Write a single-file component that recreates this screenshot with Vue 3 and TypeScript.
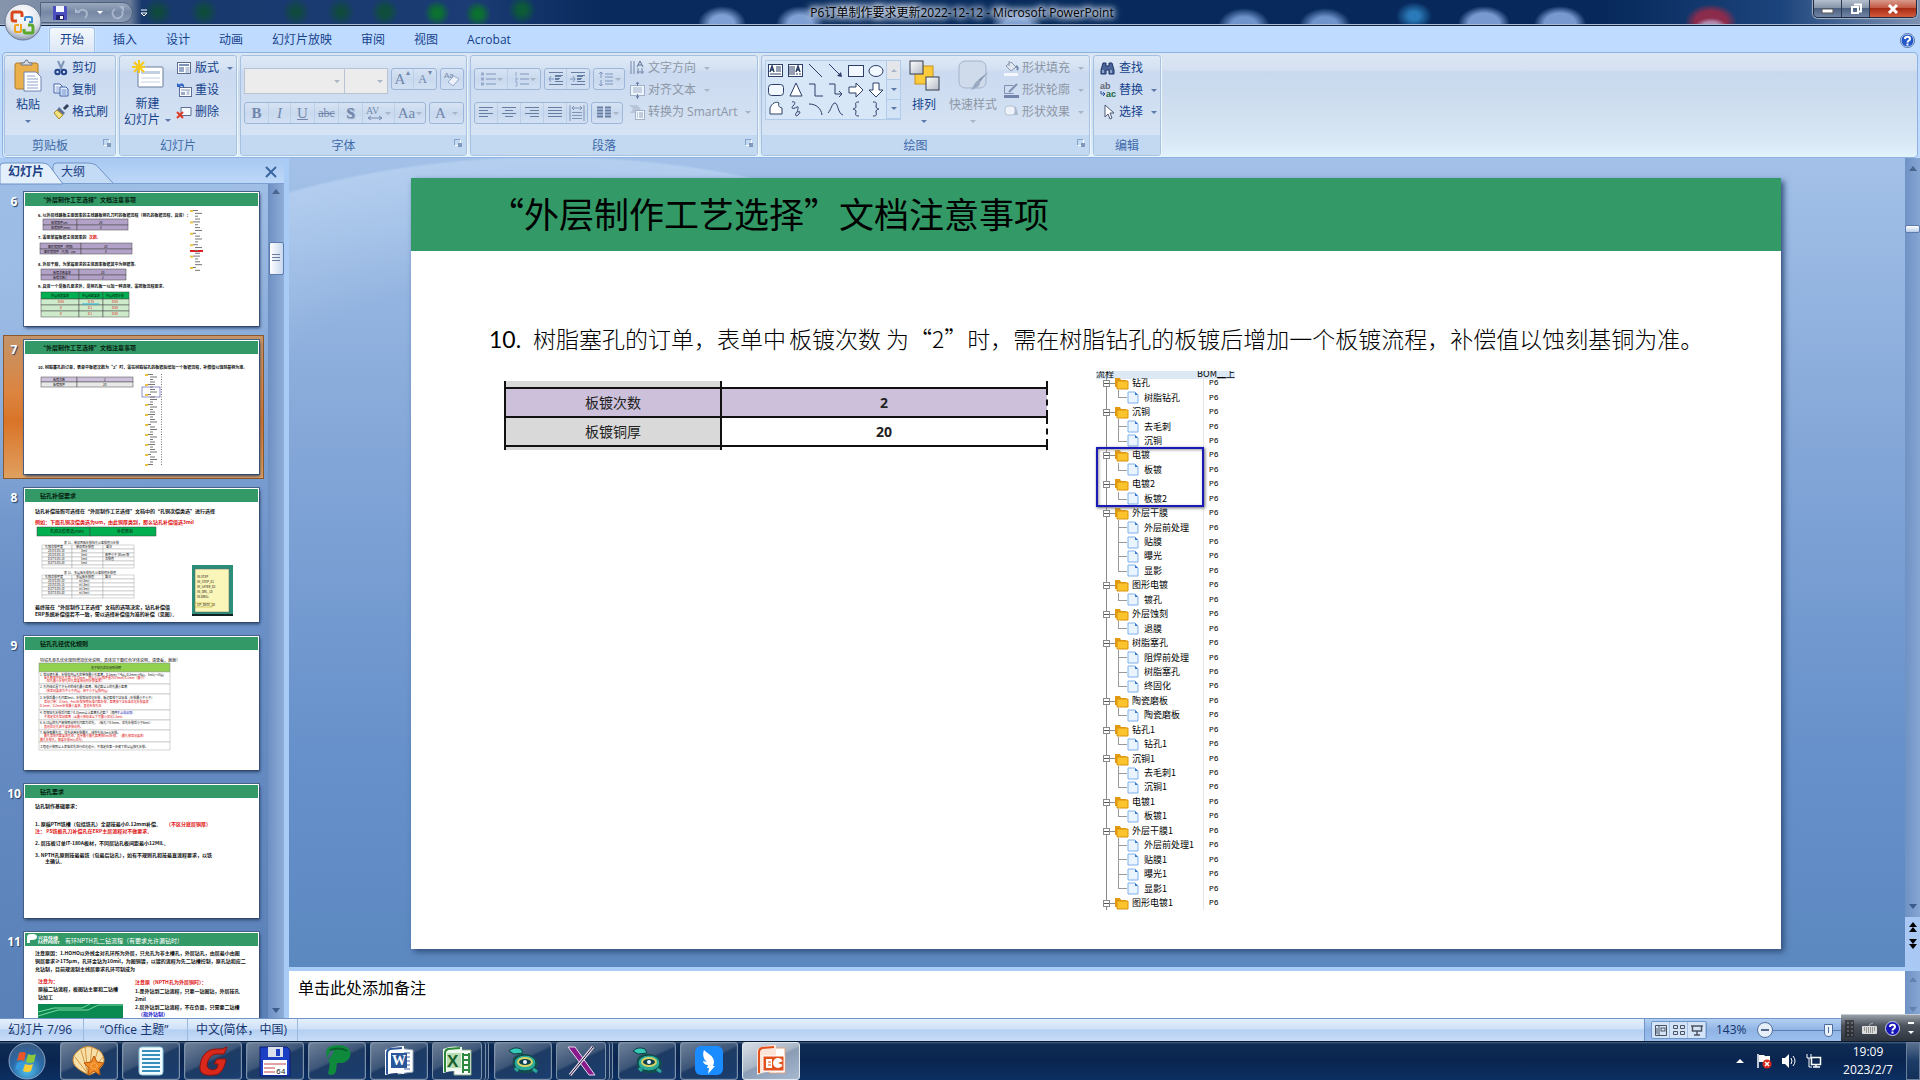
<script setup lang="ts">
import { ref } from 'vue'

interface TreeRow { name: string; folder?: boolean; last?: boolean }
interface Line { x: number; y: number; t: string; c?: string; s?: number; b?: boolean }
interface Box { x: number; y: number; w: number; h: number; f?: string; k?: string }
interface Thumb { no: number; title: string; lines: Line[]; boxes: Box[]; tree?: { x: number; y: number; n: number; step: number } }

const zoom = ref(50)
const notes = ref('单击此处添加备注')

const tabs = ['开始', '插入', '设计', '动画', '幻灯片放映', '审阅', '视图', 'Acrobat']

const P = 'fill="none" stroke="#6d87b0"'
const D = 'fill="none" stroke="#2c3e66"'
const icon: Record<string, string> = {
  cut: '<path d="M5 1l4 9M11 1L7 10" stroke="#7e96b8" stroke-width="2" fill="none"/><circle cx="4.500" cy="12" r="2.200" fill="none" stroke="#24448c" stroke-width="2"/><circle cx="11" cy="12" r="2.200" fill="none" stroke="#24448c" stroke-width="2"/>',
  copy: '<path d="M1 2h6l2 2v7H1z" fill="#fff" stroke="#3f62a8"/><path d="M2.500 5h4M2.500 7h4M2.500 9h4" stroke="#7f9fd8"/><path d="M7 5h6l2 2v7H7z" fill="#eaf2ff" stroke="#3f62a8"/><path d="M8.500 8h5M8.500 10h5M8.500 12h5" stroke="#5f84c8"/>',
  brush: '<path d="M15 1l-4 4" stroke="#35405a" stroke-width="3"/><path d="M6 3l6 6-2 2-6-5z" fill="#5e6f96"/><path d="M4 6l6 5-4 4-5-6z" fill="#f3e27c" stroke="#a08a2c"/>',
  layout: '<rect x="1.500" y="2.500" width="13" height="11" fill="#fff" stroke="#5c6f92"/><path d="M3 5h10" stroke="#7f93b8" stroke-width="2"/><rect x="3" y="7" width="5" height="5" fill="#98a9c8"/><path d="M9.500 8h4M9.500 10h4M9.500 12h4" stroke="#7f93b8"/>',
  reset: '<rect x="3.500" y="5.500" width="12" height="9" fill="#fff" stroke="#5c6f92"/><path d="M5 8h9" stroke="#7f93b8"/><rect x="5" y="10" width="4" height="3" fill="#98a9c8"/><path d="M10.500 10h3M10.500 12h3" stroke="#7f93b8"/><path d="M1 5V1l2 1.500C6 0 9 2 8 6 7 4 5 3.500 4 4l1 1z" fill="#2f63c4"/>',
  del: '<path d="M5 3.500h10v8H5z" fill="#f4f8ff" stroke="#5c6f92"/><path d="M1 8l6 6M7 8l-6 6" stroke="#e03a24" stroke-width="2"/>',
  find: '<path d="M3 3h3v3h3V3h3l2 7v4H9v-4H6v4H1v-4z" fill="#4a6398" stroke="#1f3564"/><path d="M3 10v3M11 10v3" stroke="#dbe6fa"/>',
  select: '<path d="M5 1v12l3-3 2 5 2-1-2-5h4z" fill="#fff" stroke="#4a5878"/>',
  fill: '<path d="M3 6l5-4 5 5-5 4z" fill="#dfe6f0" stroke="#8795b0"/><path d="M13 6c2 1 2 3 1 4" stroke="#7186ac" stroke-width="2" fill="none"/><path d="M6 1v5" stroke="#8795b0"/><rect x="1" y="13" width="14" height="3" fill="#f4f8fc"/>',
  outline: '<path d="M1.500 3.500h9M1.500 3.500v8h9" fill="none" stroke="#8090b0"/><path d="M14 2L6 10" stroke="#8090b0" stroke-width="2"/><rect x="1" y="13" width="15" height="3" fill="#7384aa"/>',
  effect: '<path d="M4 3h9l2 8H4z" fill="#a9b7cc"/><rect x="2" y="2" width="10" height="9" rx="3" fill="#eef3fa" stroke="#b4c0d2"/>',
  tdir: '<path d="M2 1v13M5 1v13M9 8v6M13 8v6M8 12h7" stroke="#7487a8" fill="none"/><path d="M8 7l3-6 3 6M9 5h4" stroke="#5d7196" fill="none"/>',
  talign: '<rect x="1.500" y="3.500" width="14" height="10" fill="#eef4fc" stroke="#9fb0c8"/><path d="M4 6h9M4 8h9M4 10h9" stroke="#9fb0c8"/><path d="M8.500 0v4M8.500 12v5M7 2l1.500-2L10 2M7 14l1.500 2L10 14" stroke="#6b80a4" fill="none"/>',
  smart: '<path d="M0 1h8l4 4-4 4H1l3-4z" fill="#b9c5d8"/><rect x="6.500" y="6.500" width="9" height="9" fill="#f4f7fb" stroke="#9fb0c8"/><path d="M8 9h1M8 11h1M8 13h1M10 9h4M10 11h4M10 13h4" stroke="#8fa0bc"/>',
  bullets: `<path d="M6 3h10M6 8h10M6 13h10" ${P}/><path d="M1 3h3M1 8h3M1 13h3" stroke="#8aa0c4" stroke-width="3"/>`,
  numbers: `<path d="M7 3h9M7 8h9M7 13h9" ${P}/><path d="M3 1v4M2 7h2v2H2M2 11h2v4H2" stroke="#8aa0c4" fill="none"/>`,
  outdent: `<path d="M1 1.500h14M7 4.500h8M7 7.500h5M7 10.500h8M1 13.500h14" stroke="#4d678f"/><path d="M7 5.500h6M7 8.500h4" stroke="#4d678f"/><path d="M6 8H1M3 5L1 8l2 3" ${P}/>`,
  indent: `<path d="M1 1.500h14M7 4.500h8M7 7.500h5M7 10.500h8M1 13.500h14" stroke="#4d678f"/><path d="M7 5.500h6M7 8.500h4" stroke="#4d678f"/><path d="M0 8h5M3 5l2 3-2 3" ${P}/>`,
  spacing: `<path d="M7 3h8M7 6h8M7 10h8M7 13h8" ${P}/><path d="M3 1v6M1 3l2-2 2 2M3 9v6M1 13l2 2 2-2" ${P}/>`,
  left: '<path d="M1 2.500h14M1 5.500h9M1 8.500h14M1 11.500h9" stroke="#4d678f"/>',
  center: '<path d="M1 2.500h14M4 5.500h8M1 8.500h14M4 11.500h8" stroke="#4d678f"/>',
  right: '<path d="M1 2.500h14M6 5.500h9M1 8.500h14M6 11.500h9" stroke="#4d678f"/>',
  justify: '<path d="M1 2.500h14M1 5.500h14M1 8.500h14M1 11.500h14" stroke="#4d678f"/>',
  spread: '<path d="M1 0v16M15 0v16M3 3h10M5 1L3 3l2 2M11 1l2 2-2 2M3 7.500h10M3 10.500h10M3 13.500h10" stroke="#6d82a6" fill="none"/>',
  columns: '<path d="M1 2.500h6M1 5.500h6M1 8.500h6M1 11.500h6M9 2.500h6M9 5.500h6M9 8.500h6M9 11.500h6" stroke="#4d678f" stroke-width="2"/>',
}

const shapes: string[] = [
  `<rect x="1.500" y="2.500" width="14" height="12" fill="#fff" stroke="#2c3e66"/><path d="M3 10l2-6 2 6M4 8h2" ${D} stroke-width="1.500"/><path d="M9 5h5M9 7h5M9 9h5M3 12h11" ${D}/>`,
  `<rect x="1.500" y="2.500" width="14" height="12" fill="#fff" stroke="#2c3e66"/><path d="M9 10l2-6 2 6M10 8h2" ${D} stroke-width="1.500"/><path d="M3 4v9M5 4v9M7 4v9M10 11v2M13 11v2" ${D}/>`,
  `<path d="M2 2l13 13" ${D}/>`,
  `<path d="M2 2l12 12" ${D}/><path d="M15 15l-5-1 4-4z" fill="#2c3e66"/>`,
  `<rect x="1.500" y="3.500" width="15" height="11" fill="#f2f8ff" stroke="#2c3e66"/>`,
  `<ellipse cx="9" cy="9" rx="7" ry="5.500" fill="#f2f8ff" stroke="#2c3e66"/>`,
  `<rect x="1.500" y="3.500" width="15" height="11" rx="3" fill="#f2f8ff" stroke="#2c3e66"/>`,
  `<path d="M9 2l6 13H3z" fill="#fff" stroke="#2c3e66"/>`,
  `<path d="M2 3h6v12h8" ${D}/>`,
  `<path d="M2 3h6v10h7M12 10l3 3-3 3" ${D}/>`,
  `<path d="M2 6h7V2l7 7-7 7v-4H2z" fill="#fff" stroke="#2c3e66"/>`,
  `<path d="M6 2h6v7h4l-7 7-7-7h4z" fill="#fff" stroke="#2c3e66"/>`,
  `<path d="M3 8c2-5 6-7 9-5-1 3 0 4 3 5v6H3z" fill="#fff" stroke="#2c3e66"/>`,
  `<path d="M5 2c3-1 4 1 1 4s1 3 4 1-1 6 1 5 3 0 0 3-3-2-1-3" ${D}/>`,
  `<path d="M2 4c7 0 12 4 13 11" ${D}/>`,
  `<path d="M1 13C4 10 5 3 8 3s3 11 8 12" ${D}/>`,
  `<path d="M12 2c-5 0-3 2-3 5-1 2-2 2-3 2 1 0 2 0 3 2 0 3-2 5 3 5" ${D}/>`,
  `<path d="M6 2c5 0 3 2 3 5 1 2 2 2 3 2-1 0-2 0-3 2 0 3 2 5-3 5" ${D}/>`,
]

const f = (name: string): TreeRow => ({ name, folder: true })
const n = (name: string): TreeRow => ({ name })
const z = (name: string): TreeRow => ({ name, last: true })
const tree: TreeRow[] = [
  f('钻孔'), z('树脂钻孔'), f('沉铜'), n('去毛刺'), z('沉铜'), f('电镀'), z('板镀'), f('电镀2'), z('板镀2'),
  f('外层干膜'), n('外层前处理'), n('贴膜'), n('曝光'), z('显影'), f('图形电镀'), z('镀孔'), f('外层蚀刻'), z('退膜'),
  f('树脂塞孔'), n('阻焊前处理'), n('树脂塞孔'), z('终固化'), f('陶瓷磨板'), z('陶瓷磨板'), f('钻孔1'), z('钻孔1'),
  f('沉铜1'), n('去毛刺1'), z('沉铜1'), f('电镀1'), z('板镀1'), f('外层干膜1'), n('外层前处理1'), n('贴膜1'),
  n('曝光1'), z('显影1'), f('图形电镀1'),
]

const red = '#e01010'
const lilac = '#b3a2c7'
const grid = (x: number, y: number, cols: number[], rows: number[], fill: string, k = '#444'): Box[] => {
  const out: Box[] = []
  let yy = y
  for (const h of rows) {
    let xx = x
    for (const w of cols) {
      out.push({ x: xx, y: yy, w, h, f: fill, k })
      xx += w
    }
    yy += h
  }
  return out
}

const thumbs: Thumb[] = [
  {
    no: 6, title: '“外层制作工艺选择”文档注意事项',
    tree: { x: 163, y: 18, n: 22, step: 3 },
    boxes: [
      ...grid(19, 27, [34, 51], [6, 5], lilac), ...grid(16, 51, [41, 51], [6, 5], lilac),
      ...grid(17, 77, [38, 47], [6, 5], lilac), ...grid(17, 100, [38, 24, 26], [7], '#00b050'),
      ...grid(17, 107, [38, 24, 26], [6, 6, 6], '#cdeaca'),
    ],
    lines: [
      { x: 14, y: 25, s: 4, b: true, t: '6. 以外层线路板主要因素的主线路板铜孔刀时的板镀流程（铜孔的板镀流程，具体）：' },
      { x: 14, y: 47, s: 4, b: true, t: '7. 需要掌握板镀主体因素的' }, { x: 65, y: 47, s: 4, b: true, c: red, t: '次数。' },
      { x: 14, y: 74, s: 4, b: true, t: '8.  外层干膜，为掌握要求的主体因素板镀其中为铜镀等。' },
      { x: 14, y: 96, s: 4, b: true, t: '9.  具体一个是板孔要求外，是铜孔板一以加一种选项，需按板流程要求。' },
      { x: 27, y: 32, s: 3, t: '板镀铜厚um' }, { x: 75, y: 32, s: 3, t: '20' }, { x: 27, y: 37, s: 3, t: '板镀铜厚(mm)' }, { x: 76, y: 37, s: 3, t: '8' },
      { x: 24, y: 56, s: 3, t: '图形镀铜厚（面铜）' }, { x: 80, y: 56, s: 3, t: '20' }, { x: 20, y: 61, s: 3, t: '图形镀铜厚（孔铜）um' }, { x: 81, y: 61, s: 3, t: '8' },
      { x: 29, y: 82, s: 3, t: '板镀次数要求' }, { x: 77, y: 82, s: 3, t: '20' }, { x: 29, y: 87, s: 3, t: '板镀次数1' }, { x: 78, y: 87, s: 3, t: '2' },
      { x: 27, y: 105, s: 3, t: '外层线宽要求' }, { x: 58, y: 105, s: 3, t: '外层线距要求' }, { x: 82, y: 105, s: 3, t: '外层线宽补偿' },
      { x: 34, y: 111, s: 3, c: red, t: '0.05' }, { x: 64, y: 111, s: 3, c: red, t: '0.75' }, { x: 88, y: 111, s: 3, c: red, t: '0.05' },
      { x: 36, y: 117, s: 3, c: red, t: '0' }, { x: 64, y: 117, s: 3, c: red, t: '0.1' }, { x: 88, y: 117, s: 3, c: red, t: '0.05' },
      { x: 36, y: 123, s: 3, c: red, t: '0' }, { x: 64, y: 123, s: 3, c: red, t: '0.1' }, { x: 88, y: 123, s: 3, c: red, t: '0.05' },
    ],
  },
  {
    no: 7, title: '“外层制作工艺选择”文档注意事项',
    tree: { x: 118, y: 34, n: 37, step: 2 },
    boxes: [...grid(17, 37, [36, 56], [5], '#ccc0da'), ...grid(17, 42, [36, 56], [5], '#e8e8e8'), { x: 118, y: 47, w: 18, h: 10, f: 'none', k: '#2222a0' }],
    lines: [
      { x: 14, y: 29, s: 4, b: true, t: '10.  树脂塞孔的订单，表单中板镀次数为“2”时，需在树脂钻孔的板镀后增加一个板镀流程，补偿值以蚀刻基铜为准。' },
      { x: 29, y: 41, s: 3, t: '板镀次数' }, { x: 80, y: 41, s: 3, t: '2' }, { x: 29, y: 46, s: 3, t: '板镀铜厚' }, { x: 79, y: 46, s: 3, t: '20' },
    ],
  },
  {
    no: 8, title: '钻孔补偿要求',
    boxes: [
      ...grid(13, 39, [53, 66], [9], '#00b050'), ...grid(18, 57, [30, 31, 31], [4, 4, 4, 4, 4, 3], '#fff', '#aaa'),
      ...grid(18, 87, [30, 31, 31], [4, 4, 4, 4, 4, 3], '#fff', '#aaa'),
      { x: 168, y: 77, w: 41, h: 51, f: '#2a8e78' }, { x: 171, y: 81, w: 34, h: 43, f: '#faf5b8', k: '#666' }, { x: 168, y: 126, w: 41, h: 2, f: '#122' },
      { x: 171, y: 115, w: 17, h: 4, f: 'none', k: '#b3a520' },
    ],
    lines: [
      { x: 11, y: 25, s: 5, b: true, t: '钻孔补偿按照可选择在“外层制作工艺选择”文档中的“孔铜次偿类选”进行选择' },
      { x: 11, y: 36, s: 5, b: true, c: red, t: '例如：下面孔铜次偿类选为um，由此铜厚类别，那么钻孔补偿值选3mil' },
      { x: 26, y: 45, s: 4, t: '孔铜次偿类选(mm)' }, { x: 93, y: 45, s: 4, t: '补偿类别' },
      { x: 40, y: 56, s: 3, t: '表 11、单双面板补偿钻孔公差偿值与补偿' }, { x: 40, y: 86, s: 3, t: '表 11、多层板补偿钻孔公差偿值补偿值' },
      { x: 21, y: 60, s: 3, t: '孔铜次偿厚度' }, { x: 52, y: 60, s: 3, t: '单双面补偿值' }, { x: 82, y: 60, s: 3, t: '备注' },
      { x: 24, y: 64, s: 3, t: '20.0 0.05.10' }, { x: 57, y: 64, s: 3, t: '3mil' }, { x: 24, y: 68, s: 3, t: '20.0 0.05.15' }, { x: 57, y: 68, s: 3, t: '3mil' },
      { x: 24, y: 72, s: 3, t: '0.07 0.05.10' }, { x: 57, y: 72, s: 3, t: '5mil' }, { x: 24, y: 76, s: 3, t: '0.07 0.05.20' }, { x: 57, y: 76, s: 3, t: '5mil' },
      { x: 81, y: 68, s: 3, t: '若厚小于 30um 取' }, { x: 81, y: 72, s: 3, t: '次偿值' },
      { x: 21, y: 90, s: 3, t: '孔铜次偿厚度' }, { x: 52, y: 90, s: 3, t: '多层板补偿值' }, { x: 81, y: 90, s: 3, t: '备注' },
      { x: 24, y: 94, s: 3, t: '20.0 0.05.10' }, { x: 55, y: 94, s: 3, t: 'nil 3mil' }, { x: 24, y: 98, s: 3, t: '20.0 0.05.15' }, { x: 55, y: 98, s: 3, t: 'nil 3mil' },
      { x: 24, y: 102, s: 3, t: '0.07 0.05.10' }, { x: 55, y: 102, s: 3, t: 'nil 5mil' }, { x: 24, y: 106, s: 3, t: '0.07 0.05.20' }, { x: 55, y: 106, s: 3, t: 'nil 5mil' },
      { x: 11, y: 121, s: 5, b: true, t: '最终按在“外层制作工艺选择”文档的选项决定，钻孔补偿值' },
      { x: 11, y: 128, s: 5, b: true, t: 'ERP系统补偿值若不一致，需以选择补偿值为准的补偿（见图）。' },
      { x: 173, y: 90, s: 3, t: 'IN.STEP' }, { x: 173, y: 95, s: 3, t: 'IN_STEP_01' }, { x: 173, y: 100, s: 3, t: 'IN_LAYER_02' }, { x: 173, y: 105, s: 3, t: 'IN_DRL_10' }, { x: 173, y: 110, s: 3, t: 'IN.DRILL' }, { x: 173, y: 118, s: 3, t: 'UP_DATE_10' },
    ],
  },
  {
    no: 9, title: '钻孔孔径优化规则',
    boxes: [
      { x: 15, y: 27, w: 131, h: 9, f: '#92d050', k: '#888' }, ...grid(15, 36, [131], [12, 10, 16, 10, 10, 12, 8], '#fff', '#aaa'),
    ],
    lines: [
      { x: 16, y: 26, s: 4, t: '特钻孔单孔优化规则增加优化说明，具体见下图红色字体说明，请查看，谢谢！' },
      { x: 67, y: 33, s: 3, t: '关于钻孔优化规则说明' },
      { x: 16, y: 40, s: 3, t: '1. 常规通孔单，补偿在内层孔的单按最小孔距离，0.1mm(≤4层)/0.2mm(>4层)，5mil(>=8层)' }, { x: 20, y: 43, s: 3, c: red, t: '金孔数控外钻孔孔距≥0.25mm，内层1/2层铜厚量为0.5mm/0.1mm（最小）' }, { x: 20, y: 46, s: 3, c: red, t: '（钻孔最小补偿孔径孔距要按规则补偿要求）' },
      { x: 16, y: 52, s: 3, t: '2. 孔内线位置下方允许的线孔最小距离，按边距以上的孔最小距离' }, { x: 20, y: 56, s: 3, c: red, t: '（按常规要求为不小于内层，若不小于层按内层）' },
      { x: 16, y: 63, s: 3, t: '3. 补偿后最小孔间距5mil，补偿常规优化补偿，板边距按下达标准（补偿最小不小于）' }, { x: 20, y: 67, s: 3, c: red, t: '常规订单：3.5mil，4mil补偿按照标准间距补偿，距离按下达标准优化补偿要求' }, { x: 16, y: 71, s: 3, c: red, t: '0.1mm，0.2mm补偿最小要求，其他补偿孔径' },
      { x: 16, y: 78, s: 3, t: '4. 有铜钻孔补偿后间距≥0.15mm以上距离孔边距≥（铜厚，' }, { x: 93, y: 78, s: 3, c: '#1a2ec0', t: '不含成品铜）' }, { x: 20, y: 82, s: 3, c: red, t: '不满足优先常规距离（含最小按标准以下可最小优化1.5mil）' },
      { x: 16, y: 88, s: 3, t: '6. 6/10层的孔产能按照规则孔间距为优先，（板孔≥0.5mm，优先补偿后小于6mil）' }, { x: 20, y: 92, s: 3, c: red, t: '其他优化孔若不要求按规则。' },
      { x: 16, y: 98, s: 3, t: '7. 板特殊最孔位，优先选用补偿最孔，线外孔径(5mil)补偿。' }, { x: 20, y: 101, s: 3, c: red, t: '最孔常规间距要求孔径，其余最小最孔距离按5mil补偿，（最孔按常规要求）' }, { x: 16, y: 105, s: 3, c: red, t: '最孔补偿孔，需要补偿mil(优先)' },
      { x: 16, y: 112, s: 3, t: '工程设计按照以上表格优先进行优化设计，不满足在第一步骤下的以层按孔补偿。' },
    ],
  },
  {
    no: 10, title: '钻孔要求', boxes: [],
    lines: [
      { x: 11, y: 24, s: 5, b: true, t: '钻孔制作基础要求：' },
      { x: 11, y: 42, s: 5, b: true, t: '1.   原稿PTH铣槽（包括铣孔）全部按最小0.12mm补偿。' }, { x: 142, y: 42, s: 5, b: true, c: red, t: '（不区分底层铜厚）' },
      { x: 11, y: 49, s: 5, b: true, c: red, t: '注： PS铣板孔刀补偿孔在ERP主层流程对不做要求。' },
      { x: 11, y: 61, s: 5, b: true, t: '2.   层压板订单IT-180A板材，不同层钻孔板间距最小12MIL。' },
      { x: 11, y: 73, s: 5, b: true, t: '3.   NPTH孔原则按最最铣（包最后钻孔），如有不规则孔和按最直流程要求，以铣' }, { x: 21, y: 79, s: 5, b: true, t: '主确认。' },
    ],
  },
  {
    no: 11, title: '',
    boxes: [{ x: 14, y: 72, w: 85, h: 40, f: '#0a8a50' }],
    lines: [
      { x: 14, y: 8, s: 5, b: true, c: '#fff', t: '兴森快捷' }, { x: 14, y: 12, s: 4, b: true, c: '#fff', t: 'FASTPRINT' },
      { x: 41, y: 11, s: 6, c: '#fff', t: '有环NPTH孔二钻流程（有要求允许漏钻时）' },
      { x: 11, y: 23, s: 5, b: true, t: '注意原因：1.HOHO以外线金对孔环所为外层，只允孔为非主槽孔，外层钻孔，由层最小由图' },
      { x: 11, y: 31, s: 5, b: true, t: '铜层要求≥175μm，孔环金钻为10mil，为图铜镀，以镀的流程为先二钻槽控制，原孔钻和应二' },
      { x: 11, y: 39, s: 5, b: true, t: '允钻制，目前规流制主线层要求孔环可制成为' },
      { x: 14, y: 51, s: 5, b: true, c: red, t: '注意为：' }, { x: 14, y: 59, s: 5, b: true, t: '原稿二钻流程，板图钻主要和二钻槽' }, { x: 14, y: 67, s: 5, b: true, t: '钻加工' },
      { x: 111, y: 52, s: 5, b: true, c: red, t: '注意原（NPTH孔为外层铜时）：' },
      { x: 111, y: 61, s: 5, b: true, t: '1.是外钻到二钻流程，只要一钻图钻，外层按孔' }, { x: 111, y: 69, s: 5, b: true, t: '2mil' },
      { x: 111, y: 77, s: 5, b: true, t: '2.层外钻到二钻流程，不在负面，只需要二钻槽' }, { x: 114, y: 84, s: 5, b: true, c: '#1414c8', t: '（指外钻制）' },
    ],
  },
]

const tasks = [
  { id: 'shell', label: '贝壳' }, { id: 'note', label: '记事本' }, { id: 'g', label: 'G' }, { id: 'disk', label: '64' }, { id: 'p', label: 'P' },
  { id: 'word', label: 'Word' }, { id: 'excel', label: 'Excel', stack: true }, { id: 'eye', label: '工具' }, { id: 'x', label: 'X', stack: true },
  { id: 'eye', label: '工具' }, { id: 'wing', label: '钉钉' }, { id: 'ppt', label: 'PowerPoint', active: true },
]

const taskIcon: Record<string, string> = {
  shell: '<path d="M16 30C10 27 1 23 0 16c0-6 3-8 5-10 2-2 4-3 7-4 4-1 8 0 11 2 4 1 7 5 8 10 1 7-8 14-15 16z" fill="#f8dfa8" stroke="#c98a2c"/><path d="M15 29L2 12M15 29L8 5M15 29L12 2M16 29l3-27M17 29l8-24M17 29L30 12" stroke="#d59a45" fill="none"/><path d="M21 11l3 6 7 1-5 5 1 7-6-4-6 4 1-7-5-5 7-1z" fill="#f08a24" stroke="#b9560c"/><circle cx="21" cy="21" r="3" fill="none" stroke="#fbd08c" stroke-dasharray="1 1"/>',
  note: '<rect x="4" y="2" width="24" height="28" rx="3" fill="#f2fbff" stroke="#8cc4dc"/><path d="M7 6h18M7 10h18M7 14h18M7 18h18M7 22h18M7 26h18" stroke="#3a8fbc" stroke-width="2"/>',
  g: '<path d="M30 2l-3 7h-8c-6 1-9 7-9 12 1 4 7 5 10 2l1-4h-4l3-5h9c-1 8-5 16-12 16C8 31 2 29 3 21 4 11 10 4 19 4h6z" fill="#d9281c" stroke="#8c120c"/>',
  disk: '<path d="M1 2h27l3 3v26H1z" fill="#1c3fc4" stroke="#0c1c70"/><rect x="9" y="2" width="15" height="10" fill="#dce0ea"/><rect x="17" y="4" width="4" height="7" fill="#1c3fc4"/><rect x="4" y="15" width="24" height="15" fill="#fff"/><path d="M5 19h22M5 23h11M5 27h11" stroke="#c4424c"/><text x="17" y="29" font-size="8" font-family="Liberation Mono" fill="#222">64</text>',
  p: '<path d="M8 2c7-3 19-2 21 4 2 6-3 12-9 12h-4l-1 8q-1 4-5 4l-3-1 2-11c-2 0-2-4 1-6l3-7c-3-1-6 3-6 9-2-4-3-9 1-12z" fill="#0f8a3c"/><path d="M9 5c6-2 13-2 17 1" stroke="#0a5c28" fill="none" stroke-width="2"/>',
  word: '<path d="M15 3l15 2v22l-15 2z" fill="#fff" stroke="#9ab"/><path d="M18 8h9M18 12h9M18 16h9M18 20h9M18 24h9" stroke="#3560a8"/><path d="M2 5c7-3 12-4 19-4v28c-7-2-12-1-19 1z" fill="#fff"/><path d="M4 29V8q0-3 3-4l12-1" fill="none" stroke="#2b579a" stroke-width="2"/><rect x="8" y="8" width="16" height="15" fill="#2b579a"/><text x="9" y="20" font-size="14" font-weight="bold" font-family="Liberation Serif" fill="#fff">W</text>',
  excel: '<path d="M13 5h17v25H13z" fill="#fff" stroke="#8a8"/><path d="M16 10h12M16 15h12M16 20h12M16 25h12M22 8v20M28 8v20" stroke="#2f8a40" stroke-width="2"/><path d="M2 4c7-3 12-3 19-2v25c-7-2-12-1-19 1z" fill="#eef8ee"/><path d="M4 27V8q0-3 3-4l12-1" fill="none" stroke="#2b8838" stroke-width="2"/><rect x="6" y="8" width="14" height="15" fill="#b8dcb4"/><text x="6" y="22" font-size="17" font-weight="bold" font-family="Liberation Sans" fill="#17602a">X</text>',
  ppt: '<path d="M14 3h16v25H14z" fill="#fff" stroke="#e0a080"/><path d="M2 4c7-3 12-4 19-4v28c-7-2-12-1-19 2z" fill="#fbe4d8"/><path d="M4 28V7q0-3 3-4l12-1" fill="none" stroke="#e2501c" stroke-width="2"/><rect x="8" y="11" width="21" height="15" fill="#e2501c" stroke="#fff"/><rect x="11" y="14" width="6" height="9" fill="#fff"/><path d="M13 17h3M13 20h3" stroke="#e2501c"/><circle cx="23" cy="18" r="5" fill="#fff"/><path d="M23 18l5-2v4z" fill="#e2501c"/>',
  x: '<path d="M3 2h7l20 28h-6z" fill="#8a1a8c" stroke="#e8d8ee"/><path d="M28 2L5 30" stroke="#e8e0ee" stroke-width="3"/><path d="M28 2L5 30" stroke="#24102c"/>',
  wing: '<rect x="2" y="1" width="28" height="29" rx="6" fill="#1a8cff"/><path d="M11 5c4 4 10 6 10 12 0 2-1 3-1 4h2l-7 8 1-6h-2l1-3c-3 0-5-2-5-4l4 1c-3-2-5-7-3-12z" fill="#fff"/>',
  eye: '<path d="M6 14c3-7 20-7 24 2 3 7-4 13-12 12C10 28 4 22 6 14z" fill="#14504e"/><ellipse cx="18" cy="18" rx="11" ry="8" fill="#2aa89a" stroke="#0c4040"/><ellipse cx="18" cy="17" rx="7" ry="4" fill="#0f3e4c" stroke="#d8d264" stroke-width="2"/><circle cx="18" cy="17" r="2" fill="#e8f8ff"/><path d="M2 6q5-5 12-2l2 4-9 1z" fill="#35c9b8" stroke="#0c4040"/><path d="M8 23l3 3M26 24l4 3" stroke="#2aa89a" stroke-width="3"/>',
}
</script>

<template>
  <div class="app">
    <header class="titlebar">
      <div class="quick">
        <button class="plain" aria-label="保存"><svg width="14" height="14" viewBox="0 0 14 14"><path d="M0 0h13l1 1v13H0z" fill="#4a4fc0"/><rect x="3" y="0" width="8" height="6" fill="#f4f6ff"/><rect x="3" y="9" width="8" height="5" fill="#23246c"/><rect x="7" y="10" width="3" height="3" fill="#fff"/></svg></button>
        <button class="plain" aria-label="撤消"><svg width="14" height="12" viewBox="0 0 14 12"><path d="M3 5c4-4 9-2 9 2 0 2-1 3-2 4" fill="none" stroke="#a9b6cb" stroke-width="2"/><path d="M0 6V1l5 5z" fill="#a9b6cb"/></svg></button>
        <i class="dn white"></i>
        <button class="plain" aria-label="恢复"><svg width="14" height="14" viewBox="0 0 14 14"><path d="M4 3a5 5 0 1 0 7 2" fill="none" stroke="#a9b6cb" stroke-width="2"/><path d="M8 0h5v6z" fill="#a9b6cb"/></svg></button>
      </div>
      <button class="plain more" aria-label="自定义快速访问工具栏"><svg width="8" height="8" viewBox="0 0 8 8"><path d="M1 1h6" stroke="#fff"/><path d="M1 4h6L4 7z" fill="none" stroke="#fff"/></svg></button>
      <h1>P6订单制作要求更新2022-12-12 - Microsoft PowerPoint</h1>
      <div class="winbtns">
        <button aria-label="最小化"><svg width="12" height="12" viewBox="0 0 12 12"><rect x="0" y="6" width="11" height="4" fill="#fff" stroke="#555"/></svg></button>
        <button aria-label="还原"><svg width="12" height="12" viewBox="0 0 12 12"><path d="M4 1.500h7v7H9" fill="none" stroke="#fff" stroke-width="2"/><rect x="2" y="4" width="6" height="6" fill="none" stroke="#fff" stroke-width="2"/></svg></button>
        <button class="close" aria-label="关闭"><svg width="12" height="12" viewBox="0 0 12 12"><path d="M2 2l8 8M10 2l-8 8" stroke="#fff" stroke-width="3"/></svg></button>
      </div>
      <button class="orb plain" aria-label="Office 按钮">
        <svg width="38" height="38" viewBox="0 0 38 38">
          <defs><radialGradient id="ob" cx="50%" cy="30%" r="70%"><stop offset="0" stop-color="#fff"/><stop offset="0.7" stop-color="#dde2ea"/><stop offset="1" stop-color="#8e9bb0"/></radialGradient></defs>
          <circle cx="19" cy="19" r="18" fill="url(#ob)" stroke="#6b7a94"/>
          <path d="M13 18h-3q-2 0-2-2v-5q0-2 2-2h6q2 0 2 2v3" fill="none" stroke="#d8481c" stroke-width="3"/>
          <path d="M21 18v-3q0-1 1-1h4q2 0 2 1v4h-3" fill="none" stroke="#3a8ad0" stroke-width="2"/>
          <path d="M17 21v7q0 1-1 1h-4q-1 0-1-1v-5q0-1 1-1h3" fill="none" stroke="#f0a420" stroke-width="2"/>
          <path d="M20 26v2q0 2 2 2h5q2 0 2-2v-4q0-2-2-2h-3" fill="none" stroke="#5aa82c" stroke-width="3"/>
        </svg>
      </button>
    </header>

    <nav class="tabs">
      <button v-for="(t, i) in tabs" :key="t" :class="{ on: i === 0 }">{{ t }}</button>
      <button class="plain help" aria-label="帮助"><svg width="15" height="15" viewBox="0 0 15 15"><circle cx="7.500" cy="7.500" r="6.500" fill="#2458c8" stroke="#e8f0ff"/><circle cx="7.500" cy="7.500" r="7" fill="none" stroke="#4a6ea8"/><path d="M5 6c0-3 5-3 5 0 0 1.500-2.500 1.500-2.500 3.500M7.500 10.500v2" stroke="#fff" stroke-width="2" fill="none"/></svg></button>
    </nav>

    <section class="ribbon">
      <div class="group clip">
        <div class="gbody">
          <button class="big paste">
            <svg width="28" height="31" viewBox="0 0 28 31"><rect x="1" y="3" width="23" height="26" rx="2" fill="#e9b04c" stroke="#b07c28"/><path d="M7 5h11V3h-3l-2-3h-1L10 3H7z" fill="#d8dde6" stroke="#6c7688"/><path d="M10 12h12l5 5v14H10z" fill="#fff" stroke="#6f86b4"/><path d="M13 16h8M13 19h11M13 22h11M13 25h11M13 28h11" stroke="#8ea4cc"/></svg>
            <span>粘贴</span><i class="dn"></i>
          </button>
          <div class="stack">
            <button class="row"><svg width="16" height="16" v-html="icon.cut"></svg>剪切</button>
            <button class="row"><svg width="16" height="16" v-html="icon.copy"></svg>复制</button>
            <button class="row"><svg width="16" height="16" v-html="icon.brush"></svg>格式刷</button>
          </div>
        </div>
        <footer class="has">剪贴板<i class="launch"></i></footer>
      </div>

      <div class="group slides">
        <div class="gbody">
          <button class="big new">
            <svg width="32" height="29" viewBox="0 0 32 29"><rect x="6" y="7" width="25" height="20" rx="1" fill="#fff" stroke="#6b7c9c"/><rect x="9" y="11" width="19" height="3" fill="#c5cfe2"/><path d="M9 18h19M9 22h19" stroke="#c5cfe2"/><path d="M7 0v13M0 7h13M2 2l10 10M12 2L2 12" stroke="#f6c91c" stroke-width="2"/></svg>
            <span>新建</span><span class="withdn">幻灯片<i class="dn"></i></span>
          </button>
          <div class="stack">
            <button class="row"><svg width="16" height="16" v-html="icon.layout"></svg>版式<i class="dn"></i></button>
            <button class="row"><svg width="16" height="16" v-html="icon.reset"></svg>重设</button>
            <button class="row"><svg width="16" height="16" v-html="icon.del"></svg>删除</button>
          </div>
        </div>
        <footer>幻灯片</footer>
      </div>

      <div class="group font">
        <div class="gbody rows">
          <div class="line top">
            <div class="combos"><span class="combo name"><select aria-label="字体" disabled></select><i class="dn"></i></span><span class="combo size"><select aria-label="字号" disabled></select><i class="dn"></i></span></div>
            <div class="bar"><button class="serif w22">A<sup>▴</sup></button><button class="serif small w22">A<sup>▾</sup></button></div>
            <div class="bar"><button class="w22 aa" aria-label="清除格式"><svg width="18" height="18" viewBox="0 0 18 18"><text x="1" y="8" font-size="8" font-family="Liberation Sans" fill="#5d7399">Aa</text><path d="M5 12l6-6 5 3-6 7z" fill="#f3f7fd" stroke="#8da1c2"/></svg></button></div>
          </div>
          <div class="line">
            <div class="bar">
              <button class="serif w24"><b>B</b></button><button class="serif w22"><em>I</em></button><button class="serif w24"><u>U</u></button><button class="serif w24 sm"><s>abc</s></button><button class="serif w24"><b class="sh">S</b></button>
              <button class="serif w32 sm"><svg width="18" height="16" viewBox="0 0 18 16"><text x="0" y="9" font-size="10" font-family="Liberation Serif" fill="#61789f">AV</text><path d="M2 13h14M5 11l-3 2 3 2M13 11l3 2-3 2" fill="none" stroke="#61789f"/></svg><i class="dn"></i></button>
              <button class="serif w30">Aa<i class="dn"></i></button>
            </div>
            <div class="bar"><button class="serif w34">A<i class="dn far"></i></button></div>
          </div>
        </div>
        <footer class="has">字体<i class="launch"></i></footer>
      </div>

      <div class="group para">
        <div class="gbody">
          <div class="rows">
            <div class="line top">
              <div class="bar"><button class="w34"><svg width="16" height="16" v-html="icon.bullets"></svg><i class="dn"></i></button><button class="w32"><svg width="16" height="16" v-html="icon.numbers"></svg><i class="dn"></i></button></div>
              <div class="bar"><button class="w22"><svg width="16" height="16" v-html="icon.outdent"></svg></button><button class="w22"><svg width="16" height="16" v-html="icon.indent"></svg></button></div>
              <div class="bar"><button class="w30"><svg width="16" height="16" v-html="icon.spacing"></svg><i class="dn"></i></button></div>
            </div>
            <div class="line">
              <div class="bar"><button v-for="k in ['left', 'center', 'right', 'justify']" :key="k" class="w24"><svg width="16" height="16" v-html="icon[k]"></svg></button><button class="w18"><svg width="16" height="16" v-html="icon.spread"></svg></button></div>
              <div class="bar"><button class="w30"><svg width="16" height="16" v-html="icon.columns"></svg><i class="dn"></i></button></div>
            </div>
          </div>
          <div class="stack off">
            <button class="row"><svg width="16" height="16" v-html="icon.tdir"></svg>文字方向<i class="dn"></i></button>
            <button class="row"><svg width="16" height="16" v-html="icon.talign"></svg>对齐文本<i class="dn"></i></button>
            <button class="row"><svg width="16" height="16" v-html="icon.smart"></svg>转换为 SmartArt<i class="dn"></i></button>
          </div>
        </div>
        <footer class="has">段落<i class="launch"></i></footer>
      </div>

      <div class="group draw">
        <div class="gbody">
          <div class="gallery">
            <div class="shapes"><button v-for="(s, i) in shapes" :key="i" class="plain"><svg width="18" height="18" v-html="s"></svg></button></div>
            <div class="gscroll"><button><i class="up"></i></button><button><i class="dn"></i></button><button><i class="dn bar1"></i></button></div>
          </div>
          <button class="big arrange">
            <svg width="31" height="31" viewBox="0 0 31 31"><defs><linearGradient id="gg" x2="1" y2="1"><stop offset="0" stop-color="#fff"/><stop offset="1" stop-color="#b4bac4"/></linearGradient></defs><rect x="6" y="6" width="18" height="18" fill="#fbcb3c" stroke="#c8901c"/><rect x="1" y="1" width="13" height="13" fill="url(#gg)" stroke="#333d50"/><rect x="17" y="17" width="13" height="13" fill="url(#gg)" stroke="#333d50"/></svg>
            <span>排列</span><i class="dn"></i>
          </button>
          <button class="big styles off">
            <svg width="31" height="31" viewBox="0 0 31 31"><rect x="1" y="1" width="27" height="27" rx="6" fill="#cfdaea" stroke="#a4b4cc"/><path d="M30 12L22 22l-2-2z" fill="#8799b4"/><path d="M21 20c3 3 0 8-8 10 3-4 3-8 8-10z" fill="#9aaac2"/></svg>
            <span>快速样式</span><i class="dn"></i>
          </button>
          <div class="stack off">
            <button class="row"><svg width="16" height="16" v-html="icon.fill"></svg>形状填充<i class="dn"></i></button>
            <button class="row"><svg width="16" height="16" v-html="icon.outline"></svg>形状轮廓<i class="dn"></i></button>
            <button class="row"><svg width="16" height="16" v-html="icon.effect"></svg>形状效果<i class="dn"></i></button>
          </div>
        </div>
        <footer class="has">绘图<i class="launch"></i></footer>
      </div>

      <div class="group edit">
        <div class="gbody">
          <div class="stack">
            <button class="row"><svg width="16" height="16" v-html="icon.find"></svg>查找</button>
            <button class="row"><svg width="16" height="16" viewBox="0 0 16 16"><text x="0" y="7" font-size="9" font-weight="bold" font-family="Liberation Sans" fill="#667">ab</text><text x="6" y="15" font-size="9" font-weight="bold" font-family="Liberation Sans" fill="#1a6a3c">ac</text><path d="M1 9v3h4M3 10l2 2-2 2" fill="none" stroke="#2c50a0"/></svg>替换<i class="dn"></i></button>
            <button class="row"><svg width="16" height="16" v-html="icon.select"></svg>选择<i class="dn"></i></button>
          </div>
        </div>
        <footer>编辑</footer>
      </div>
    </section>

    <div class="work">
      <aside class="side">
        <div class="sidetabs">
          <svg class="tabshape" width="116" height="22" viewBox="0 0 116 22"><path d="M53 21V4q0-3 4-3h30q8 0 11 4l15 16" fill="#c4dbf6" stroke="#6f93c8"/><path d="M0 22V4q0-3 4-3h38q6 0 9 5l12 16z" fill="#e4effc" stroke="#6f93c8"/></svg>
          <button class="on">幻灯片</button><button>大纲</button>
          <button class="plain x" aria-label="关闭"><svg width="12" height="12" viewBox="0 0 12 12"><path d="M1 1l10 10M11 1L1 11" stroke="#3a66a0" stroke-width="2"/></svg></button>
        </div>
        <div class="sidebody">
          <ol class="thumbs">
            <li v-for="th in thumbs" :key="th.no" :class="{ sel: th.no === 7 }">
              <b>{{ th.no }}</b>
              <svg class="thumb" width="235" height="134" viewBox="0 0 235 134">
                <rect width="235" height="134" fill="#fff"/>
                <rect x="1" y="1" width="233" height="13" fill="#339966"/>
                <text x="16" y="10" font-size="6" font-weight="bold" fill="#062010">{{ th.title }}</text>
                <path v-if="th.no === 11" d="M3 11V5q0-3 4-3h2q4 0 4 3t-5 3H6v3z" fill="#fff"/>
                <rect v-for="(b, i) in th.boxes" :key="'b' + i" :x="b.x" :y="b.y" :width="b.w" :height="b.h" :fill="b.f" :stroke="b.k" stroke-width="0.500"/>
                <path v-if="th.no === 11" d="M14 84l20-6h30l10-5h25M14 80l16-4h28l8-4" fill="none" stroke="#7fd8a4"/>
                <path v-if="th.no === 6" d="M58 112h17" stroke="#20b4e0"/>
                <path v-if="th.no === 6" d="M166 59h13" stroke="#e02020" stroke-width="2"/>
                <g v-if="th.tree">
                  <g v-for="k in th.tree.n" :key="k">
                    <rect v-if="k % 4 === 1" :x="th.tree.x + 3" :y="th.tree.y + (k - 1) * th.tree.step * (th.no === 7 ? 1.25 : 0.95)" width="3" height="2" fill="#f0c040"/>
                    <rect :x="th.tree.x + (k % 4 === 1 ? 6 : 8)" :y="th.tree.y + (k - 1) * th.tree.step * (th.no === 7 ? 1.25 : 0.95)" :width="3 + (k % 3) * 2" height="1" fill="#777"/>
                    <rect v-if="th.no === 7" :x="th.tree.x + 19" :y="th.tree.y + (k - 1) * 2.5" width="1" height="1" fill="#777"/>
                  </g>
                </g>
                <text v-for="(l, i) in th.lines" :key="'l' + i" :x="l.x" :y="l.y" :font-size="l.s" :fill="l.c || '#111'" :font-weight="l.b ? 'bold' : 'normal'">{{ l.t }}</text>
              </svg>
            </li>
          </ol>
          <div class="vscroll"><i class="up"></i><span class="grip"></span><i class="dn"></i></div>
        </div>
      </aside>

      <main class="main">
        <div class="stagerow">
          <div class="stage">
            <article class="slide">
              <h2>“外层制作工艺选择”文档注意事项</h2>
              <p><span class="no">10.</span>树脂塞孔的订单，表单中<span class="field">板镀次数</span>为“2”时，需在树脂钻孔的板镀后增加一个板镀流程，补偿值以蚀刻基铜为准。</p>
              <div class="content">
                <table>
                  <tbody>
                    <tr class="stub"><th></th><td></td></tr>
                    <tr class="lilac"><th scope="row">板镀次数</th><td>2</td></tr>
                    <tr><th scope="row">板镀铜厚</th><td>20</td></tr>
                    <tr class="stub end"><th></th><td></td></tr>
                  </tbody>
                </table>
                <div class="tree">
                  <div class="treehead"><span>流程</span><span>BOM▁上</span></div>
                  <ul>
                    <li v-for="(r, i) in tree" :key="i" :class="{ folder: r.folder, last: r.last }">
                      <span class="node">
                        <i v-if="r.folder" class="exp"></i>
                        <i v-else class="elbow"></i>
                        <svg v-if="r.folder" width="13" height="12" viewBox="0 0 13 12"><path d="M0 1h5l1 2h5v7H0z" fill="#e39a12"/><path d="M2 4h11v8H2z" fill="#fcc42c" stroke="#d8920c"/></svg>
                        <svg v-else width="12" height="13" viewBox="0 0 12 13"><path d="M1 1h7l3 3v8H1z" fill="#eaf4ff" stroke="#7fb0ea"/><path d="M8 1l3 3H8z" fill="#3a78d0"/></svg>
                        {{ r.name }}
                      </span>
                      <span class="bom">P6</span>
                    </li>
                  </ul>
                  <div class="mark"></div>
                </div>
              </div>
            </article>
          </div>
          <div class="vscroll wide"><i class="up"></i><span class="grip short"></span><i class="dn"></i>
            <div class="pager"><i class="up"></i><i class="up"></i><i class="dn gap"></i><i class="dn"></i></div>
          </div>
        </div>
        <div class="notes">
          <textarea v-model="notes" aria-label="备注"></textarea>
          <div class="vscroll wide"><i class="up"></i><i class="dn push"></i></div>
        </div>
      </main>
    </div>

    <footer class="status">
      <span class="cell c1">幻灯片 7/96</span><span class="cell c2">“Office 主题”</span><span class="cell c3">中文(简体，中国)</span>
      <div class="zoomarea">
        <div class="views">
          <button aria-label="普通视图"><svg width="12" height="11" viewBox="0 0 12 11"><path d="M.5.5h11v10H.5zM4 0v11M2 3v6" fill="none" stroke="#4c5360"/><rect x="6" y="3" width="4" height="3" fill="none" stroke="#4c5360"/></svg></button>
          <button aria-label="幻灯片浏览"><svg width="12" height="11" viewBox="0 0 12 11"><path d="M.5.5h4v3h-4zM7.500.5h4v3h-4zM.5 6.500h4v3h-4zM7.500 6.500h4v3h-4z" fill="none" stroke="#4c5360"/></svg></button>
          <button aria-label="幻灯片放映"><svg width="12" height="11" viewBox="0 0 12 11"><path d="M0 1h12M1.500 1v5h9V1M6 6v4M3 10h6" fill="none" stroke="#4c5360" stroke-width="1.500"/></svg></button>
        </div>
        <span class="pct">143%</span>
        <button class="minus" aria-label="缩小"></button>
        <input v-model="zoom" type="range" min="0" max="100" aria-label="缩放">
      </div>
      <div class="lang">
        <i class="dots"></i>
        <svg width="15" height="11" viewBox="0 0 15 11"><rect x="0" y="3" width="15" height="8" rx="1" fill="#dcdcdc"/><path d="M2 5h11M2 7h11M4 9h7" stroke="#555" stroke-dasharray="1 1"/><path d="M7 3q0-2 4-3" stroke="#aaa" fill="none"/></svg>
        <svg width="15" height="15" viewBox="0 0 15 15"><circle cx="7.500" cy="7.500" r="7" fill="#1414b8" stroke="#cfd4e8"/><path d="M5 6c0-3 5-3 5 0 0 1.500-2.500 1.500-2.500 3.500M7.500 10.500v2" stroke="#fff" stroke-width="2" fill="none"/></svg>
        <span class="lm"><i class="dash"></i><i class="dn white"></i></span>
      </div>
    </footer>

    <footer class="taskbar">
      <button class="plain start" aria-label="开始">
        <svg width="38" height="38" viewBox="0 0 38 38"><defs><radialGradient id="st" cx="50%" cy="75%" r="70%"><stop offset="0" stop-color="#52c4ee"/><stop offset="0.600" stop-color="#2a6aa8"/><stop offset="1" stop-color="#3a5c84"/></radialGradient></defs><circle cx="19" cy="19" r="18" fill="url(#st)" stroke="#8aa4c4"/><path d="M11 11q4-2 7 0l-2 8q-3-2-7 0z" fill="#e8562a"/><path d="M20 12q4 2 8 0l-2 8q-4 2-8 0z" fill="#8cc83c"/><path d="M9 21q4-2 7 0l-2 7q-3-2-7 0z" fill="#3a9ae0"/><path d="M17 22q4 2 8 0l-2 7q-4 2-8 0z" fill="#fbcc34"/></svg>
      </button>
      <div class="tasks">
        <button v-for="(t, i) in tasks" :key="i" :class="{ active: t.active, multi: t.stack }" :aria-label="t.label">
          <svg width="32" height="32" viewBox="0 0 32 32" v-html="taskIcon[t.id]"></svg>
        </button>
      </div>
      <div class="tray">
        <div class="icons">
          <i class="up white"></i>
          <svg width="16" height="16" viewBox="0 0 16 16"><path d="M2 1v14" stroke="#fff" stroke-width="1.500"/><path d="M3 2h5l1 1h5v7H9L8 9H3z" fill="#fff"/><circle cx="11" cy="11" r="4.500" fill="#d8281c"/><path d="M9 9l4 4M13 9l-4 4" stroke="#fff" stroke-width="1.500"/></svg>
          <svg width="16" height="16" viewBox="0 0 16 16"><path d="M1 5h3l4-4v14l-4-4H1z" fill="#fff"/><path d="M10 5q2 3 0 6M12 3q4 5 0 10" fill="none" stroke="#fff"/></svg>
          <svg width="16" height="16" viewBox="0 0 16 16"><path d="M5.500 4.500h9v7h-9zM7 14h7M10 12v2" fill="none" stroke="#fff" stroke-width="1.500"/><path d="M1 1v4h4V1M3 5v9h3" fill="none" stroke="#fff"/></svg>
        </div>
        <div class="clock"><time>19:09</time><time>2023/2/7</time></div>
        <button class="desk" aria-label="显示桌面"></button>
      </div>
    </footer>
  </div>
</template>

<style>
html, body { margin: 0; height: 100%; }
body { overflow: hidden; }
#app { height: 100%; }
</style>

<style scoped>
.app { height: 100vh; min-height: 700px; display: flex; flex-direction: column; font: 12px/16px "Open Sans", "Noto Sans CJK SC", sans-serif; color: #15428b; background: #bfdbff; overflow: hidden; }
.app *, .app *::before, .app *::after { box-sizing: border-box; }
button { font: inherit; color: inherit; padding: 0; margin: 0; border: 0; background: none; display: flex; align-items: center; justify-content: center; white-space: nowrap; }
svg { display: block; flex: none; overflow: visible; }
i { display: block; flex: none; font-style: normal; }
.dn { width: 0; height: 0; border: 3px solid transparent; border-top-color: #5a78a8; border-bottom: 0; }
.up { width: 0; height: 0; border: 4px solid transparent; border-bottom-color: #49658f; border-top: 0; }
.dn.white { border-top-color: #fff; }
.up.white { border-bottom-color: #fff; }

.titlebar { position: relative; flex: none; height: 26px; display: flex; align-items: center; border-bottom: 1px solid #10233f; box-shadow: inset 0 -1px #a9b9cf;
  background:
    radial-gradient(ellipse 24px 18px at 722px 24px, #7ea0d4 50%, transparent),
    radial-gradient(ellipse 24px 18px at 800px 24px, #7ea0d4 50%, transparent),
    radial-gradient(ellipse 26px 16px at 1017px 26px, #7ea0d4 50%, transparent),
    radial-gradient(ellipse 26px 18px at 1244px 26px, #6f94cc 50%, transparent),
    radial-gradient(ellipse 26px 18px at 1325px 26px, #6f94cc 50%, transparent),
    radial-gradient(ellipse 18px 14px at 1414px 16px, #2a7ab8 30%, transparent),
    radial-gradient(ellipse 26px 18px at 1484px 24px, #7898d0 60%, transparent),
    radial-gradient(ellipse 26px 18px at 1560px 24px, #7898d0 60%, transparent),
    radial-gradient(ellipse 16px 8px at 1711px 26px, #b08cb0 50%, transparent),
    radial-gradient(ellipse 26px 18px at 1711px 22px, #8c2c4c 60%, transparent),
    radial-gradient(circle 14px at 158px 12px, #0f4a3c 20%, transparent),
    radial-gradient(circle 14px at 204px 12px, #0f4c3c 20%, transparent),
    radial-gradient(circle 14px at 296px 12px, #0f4a3c 20%, transparent),
    radial-gradient(circle 14px at 341px 12px, #0f4a3c 20%, transparent),
    radial-gradient(circle 14px at 385px 12px, #0f4e3c 30%, transparent),
    radial-gradient(circle 13px at 437px 13px, #0c7030 30%, transparent),
    radial-gradient(circle 13px at 478px 14px, #0c7030 30%, transparent),
    radial-gradient(circle 14px at 522px 10px, #0c5a38 30%, transparent),
    linear-gradient(90deg, #8795ac 0, #6a7c9a 130px, #17386c 142px, #1b3c74 470px, #082a5c 600px, #06285a 1600px, #1c447c 1780px, #7d92b2 100%); }
.quick { margin-left: 40px; width: 93px; height: 21px; padding-left: 12px; display: flex; align-items: center; gap: 8px; border: 1px solid #4f617e; border-radius: 0 11px 11px 0; background: linear-gradient(#9aa8bd, #7688a4 50%, #8c9db6); }
.more { margin-left: 7px; }
h1 { flex: 1; margin: 0; padding: 1px 37px 0 0; font-size: 12px; line-height: 16px; font-weight: 400; color: #000; text-align: center; text-shadow: 0 0 8px #dce6f4, 0 0 8px #dce6f4, 0 0 6px #dce6f4, 0 0 4px #c4d2e8, 0 0 12px #b4c4dc; }
.winbtns { align-self: flex-start; display: flex; height: 18px; margin-right: 3px; border: 1px solid #1d2a40; border-top: 0; border-radius: 0 0 5px 5px; overflow: hidden; box-shadow: 0 0 1px 1px #a9b6ca; }
.winbtns button { width: 28px; height: 17px; background: linear-gradient(#b4bfcd, #8795ab 45%, #4c6080 50%, #7186a6); border-right: 1px solid #2a3850; }
.winbtns .close { width: 46px; border-right: 0; background: linear-gradient(#d99a8c, #c45a44 45%, #a82c14 50%, #d45a3c); }
.orb { position: absolute; left: 4px; top: 3px; z-index: 2; }

.tabs { flex: none; height: 26px; display: flex; align-items: flex-end; gap: 7px; padding-left: 49px; background: #bfdbff; }
.tabs button { height: 25px; padding: 0 10px; border: 1px solid transparent; border-bottom: 0; border-radius: 3px 3px 0 0; }
.tabs .on { background: linear-gradient(#f4f8fd, #dce7f5); border-color: #9fc4ee; box-shadow: 0 0 2px #fff; }
.tabs .help { margin: 0 4px 5px auto; padding: 0; height: 15px; }

.ribbon { flex: none; height: 106px; margin: 0 2px; padding: 2px 1px; display: flex; gap: 3px; border: 1px solid #8db2e3; border-radius: 4px; background: linear-gradient(#dbe6f4, #d5e1f1 16%, #c8d8ee 18%, #cfdfef 55%, #d9e8f5 85%, #e2f3fd); }
.group { flex: none; height: 101px; display: flex; flex-direction: column; border: 1px solid #a6c2e0; border-radius: 3px; background: linear-gradient(#dfe9f6, #d4e2f3 12%, #cbdaf0 16%, #d2e0f2 60%, #d9e8f7); box-shadow: 1px 1px #eef6fd; overflow: hidden; }
.group footer { position: relative; flex: none; height: 20px; line-height: 21px; text-align: center; color: #3e6aaa; background: #c2d9f1; }
.group .has { padding-right: 20px; }
.launch { position: absolute; right: 5px; top: 4px; width: 7px; height: 7px; border: 1px solid #86a3cc; border-right-color: #fff; border-bottom-color: #fff; }
.launch::after { content: ""; position: absolute; left: 3px; top: 3px; width: 4px; height: 4px; background: #7f98bc; }
.gbody { flex: 1; display: flex; align-items: flex-start; }
.clip { width: 112px; } .slides { width: 118px; } .font { width: 227px; } .para { width: 288px; } .draw { width: 329px; } .edit { width: 68px; }
.big { flex-direction: column; justify-content: flex-start; padding-top: 4px; height: 79px; }
.big svg { margin-bottom: 6px; }
.big .dn { margin-top: 7px; }
.big .withdn { display: flex; align-items: center; gap: 5px; }
.big .withdn .dn { margin: 0; }
.paste { width: 46px; } .new { width: 55px; }
.new svg { margin-bottom: 7px; }
.arrange { width: 44px; margin-left: 1px; } .styles { width: 54px; }
.stack { padding-top: 1px; display: flex; flex-direction: column; align-items: flex-start; }
.row { height: 22px; gap: 3px; }
.row .dn { margin-left: 5px; }
.clip .stack { padding-left: 2px; } .slides .stack { padding-left: 1px; }
.edit .stack { padding-left: 6px; } .draw .stack { padding-left: 3px; } .para .stack { padding-left: 1px; }
.off { color: #8d96a5; }
.off .dn, .bar .dn, .combo .dn { border-top-color: #a9b4c6; }
.rows { flex-direction: column; padding: 12px 3px 0; }
.line { display: flex; gap: 3px; }
.line.top { height: 34px; align-items: flex-start; }
.bar { display: flex; height: 22px; border: 1px solid #9cb6da; border-radius: 3px; background: linear-gradient(#d7e3f4, #c9d9ee 50%, #d2e0f2); }
.bar button { height: 20px; border-right: 1px solid #bccfe8; color: #7186ab; gap: 1px; }
.bar button:last-child { border-right: 0; }
.bar svg { opacity: 0.8; }
.w18 { width: 18px; } .w22 { width: 22px; } .w24 { width: 24px; } .w30 { width: 30px; } .w32 { width: 32px; } .w34 { width: 33px; }
.para .w18 { width: 20px; }
.para .w24 { width: 23px; }
.serif { font: 15px/20px "Liberation Serif", serif; }
.serif.small { font-size: 12px; }
.serif sup { font-size: 8px; line-height: 8px; align-self: flex-start; }
.serif.sm { font-size: 12px; }
.sh { text-shadow: 1px 1px 1px #7f93b4; }
.bar .far { margin-left: 5px; }
.combos { display: flex; }
.combo { display: flex; align-items: center; height: 26px; border: 1px solid #b8c4d4; background: #ececec; padding-right: 4px; }
.combo + .combo { border-left: 0; }
.combo select { flex: 1; min-width: 0; height: 24px; border: 0; background: transparent; appearance: none; }
.name { width: 101px; } .size { width: 43px; }
.gallery { display: flex; margin: 4px 0 0 3px; border: 1px solid #b2cbea; background: #d8e7f8; height: 60px; }
.shapes { display: grid; grid-template-columns: repeat(6, 20px); grid-auto-rows: 19px; }
.gscroll { width: 14px; display: flex; flex-direction: column; }
.gscroll button { flex: 1; border: 1px solid #b2cbea; background: #d3e3f6; border-width: 0 0 1px 1px; }
.gscroll button:first-child { background: #e4e6ea; }
.gscroll .up { border-width: 0 3px 3px; border-bottom-color: #a9b4c6; }
.gscroll .bar1 { box-shadow: 0 -5px 0 -3px #5a78a8; }

.work { flex: 1; min-height: 0; display: flex; }
.side { flex: none; width: 289px; display: flex; flex-direction: column; border-right: 5px solid #a8ccf6; background: radial-gradient(ellipse 300px 260px at 0 100px, #9dbde6, transparent), linear-gradient(#a4c2e8, #83a6d6 25%, #6b91c8 50%, #5a80b8); }
.sidetabs { position: relative; flex: none; height: 26px; padding-top: 3px; display: flex; align-items: center; background: linear-gradient(#a9c9f2, #bcd7f8); border-bottom: 1px solid #7b9fd0; }
.tabshape { position: absolute; left: 0; top: 4px; }
.sidetabs button { position: relative; color: #1c3f84; }
.sidetabs .on { margin: 0 17px 0 8px; font-weight: 700; }
.sidetabs .x { margin-left: auto; margin-right: 7px; }
.sidebody { flex: 1; min-height: 0; display: flex; }
.thumbs { flex: 1; min-width: 0; margin: 0; padding: 3px 4px 0 3px; list-style: none; overflow: hidden; }
.thumbs li { height: 144px; margin-bottom: 4px; padding: 4px 0 0; display: flex; border: 1px solid transparent; }
.thumbs li b { width: 20px; flex: none; padding-top: 2px; font-size: 12px; color: #fff; text-align: center; text-shadow: 1px 1px 1px #23406c; }
.thumbs .sel { background: linear-gradient(#c49468, #dc8440 40%, #d97428 60%, #e0a060); border-color: #8a5a2c; }
.thumb { box-shadow: 1px 2px 3px #2c4468, 0 0 0 1px #4a648c; overflow: hidden; font-family: "Noto Sans CJK SC", sans-serif; }
.vscroll { flex: none; width: 16px; display: flex; flex-direction: column; align-items: center; padding: 5px 0; background: linear-gradient(90deg, #6d8fc2, #8fadd8); }
.vscroll .up { border-width: 0 4px 5px; }
.vscroll .dn { border-width: 5px 4px 0; border-top-color: #3c5a8c; margin-top: auto; }
.grip { width: 15px; height: 33px; margin-top: 48px; border: 1px solid #5a7cae; border-radius: 2px; background: repeating-linear-gradient(#6b7f9c 0 1px, transparent 1px 3px) center / 8px 9px no-repeat, linear-gradient(90deg, #fff, #c8d8ee); }
.wide { width: 15px; padding: 8px 0 6px; }
.wide.vscroll { background: linear-gradient(90deg, #6f92c4, #86a6d4); }
.short { height: 8px; margin-top: 54px; background: linear-gradient(#fff, #b8cce8); }
.pager { width: 15px; margin: 8px 0 -6px; padding: 5px 0 18px; display: flex; flex-direction: column; align-items: center; background: #a9c9f4; }
.pager .up { border-bottom-color: #000; }
.pager .dn { border-top-color: #000; margin-top: 0; }
.pager .gap { margin-top: 7px; }
.push { margin-top: auto; }

.main { flex: 1; min-width: 0; display: flex; flex-direction: column; }
.stagerow { flex: 1; min-height: 0; display: flex; }
.stage { flex: 1; min-width: 0; padding: 20px 124px 18px 122px; display: flex; background: radial-gradient(ellipse 520px 262px at 260px 260px, transparent 55%, #c4dbf680 99%, transparent 100%) 0 0 / 100% 260px no-repeat, linear-gradient(#a3c1e8, #84a7d8 35%, #6690ca 75%, #5c88c0); }
.slide { flex: 1; min-width: 0; background: #fff; color: #000; box-shadow: 3px 3px 6px #33507c; overflow: hidden; font-family: "Noto Sans CJK SC", sans-serif; }
.slide h2 { margin: 0; height: 73px; padding: 0 0 4px 78px; display: flex; align-items: center; font-size: 35px; line-height: 40px; font-weight: 400; background: #339966; white-space: nowrap; }
.slide p { margin: 0; padding: 71px 0 0 78px; font-size: 23px; line-height: 32px; font-weight: 300; white-space: nowrap; }
.slide .no { display: inline-block; width: 44px; font-family: Lato, sans-serif; font-weight: 400; }
.field { margin: 0 5px 0 3px; }
.content { display: flex; align-items: flex-start; gap: 48px; margin-top: 16px; padding-left: 93px; }
table { width: 544px; margin-top: 10px; border-collapse: collapse; table-layout: fixed; font: 14px/20px "Open Sans", "Noto Sans CJK SC", sans-serif; color: #222; }
th, td { padding: 0; height: 29px; border: 2px solid #111; text-align: center; }
th { width: 216px; font-weight: 400; background: #d9d9d9; }
td { font-weight: 700; border-right-style: dashed; }
.stub th, .stub td { height: 7px; border-top: 0; }
.end th, .end td { height: 4px; border-bottom: 0; }
.lilac th, .lilac td { background: #ccc0da; }

.tree { position: relative; width: 139px; font: 9px/12px "Noto Sans CJK SC", sans-serif; }
.treehead { height: 8px; display: flex; justify-content: space-between; overflow: hidden; line-height: 8px; background: #dce8f4; align-items: flex-end; }
.treehead span { line-height: 12px; height: 11px; }
.tree ul { margin: -3px 0 0; padding: 0; height: 534px; list-style: none; display: flex; flex-direction: column; }
.tree li { flex: 1; min-height: 0; display: flex; align-items: center; }
.node { position: relative; width: 108px; height: 100%; padding-left: 31px; display: flex; align-items: center; gap: 5px; border-right: 1px solid #e4e4e4; white-space: nowrap; }
.folder .node { padding-left: 19px; gap: 4px; }
.node::before { content: ""; position: absolute; left: 10px; top: 0; bottom: 0; border-left: 1px solid #8a8a8a; }
.exp { position: absolute; left: 7px; top: 4px; width: 7px; height: 7px; border: 1px solid #8a8a8a; background: linear-gradient(#fff 2px, #555 2px 3px, #fff 3px); }
.exp::after { content: ""; position: absolute; left: 6px; top: 2px; width: 5px; height: 1px; background: #8a8a8a; }
.elbow { position: absolute; left: 22px; top: 0; height: 100%; border-left: 1px solid #9a9a9a; }
.last .elbow { height: 8px; }
.elbow::after { content: ""; position: absolute; left: 0; top: 7px; width: 8px; height: 1px; background: #9a9a9a; }
.bom { padding-left: 5px; font: 8px/12px "Liberation Mono", monospace; }
.mark { position: absolute; left: 0; top: 76px; width: 108px; height: 60px; border: 2px solid #1a1ab8; box-shadow: 1px 1px 3px #666, inset 1px 1px 3px #999; }

.notes { flex: none; height: 51px; display: flex; border-top: 4px solid #a8ccf6; background: #fff; }
textarea { flex: 1; min-width: 0; margin: 0; padding: 5px 9px; border: 0; resize: none; outline: none; background: #fff; color: #000; font: 16px/24px "Open Sans", "Noto Sans CJK SC", sans-serif; overflow: hidden; }
.notes .wide { padding: 6px 0; }
.notes .up { border-bottom-color: #6482b0; } .notes .dn { border-top-color: #6482b0; }

.status { position: relative; flex: none; height: 23px; display: flex; align-items: center; border-top: 1px solid #6f94c8; background: linear-gradient(#e4effc, #cfe1f8 45%, #b4cff2 50%, #c8ddf8); color: #15356f; }
.cell { height: 100%; display: flex; align-items: center; border-right: 1px solid #9db9de; white-space: nowrap; }
.c1 { width: 84px; padding-left: 8px; } .c2 { width: 104px; padding-left: 16px; } .c3 { width: 110px; padding-left: 8px; }
.zoomarea { margin-left: auto; width: 276px; height: 100%; padding-left: 6px; display: flex; align-items: center; border-left: 1px solid #6f94c8; background: linear-gradient(#b4d0f4, #8fb4e4 50%, #9cc0ee); }
.views { display: flex; height: 18px; border: 1px solid #6f94c8; border-radius: 2px; background: #d4e4f8; }
.views button { width: 18px; height: 16px; border-right: 1px solid #a4c0e4; }
.pct { width: 50px; padding-left: 9px; }
.minus { flex: none; width: 16px; height: 16px; border-radius: 8px; border: 1px solid #54719c; background: linear-gradient(#54678a, #54678a) center / 8px 2px no-repeat, #e6eefa; }
input[type=range] { flex: none; width: 110px; height: 16px; margin: 0; appearance: none; background: linear-gradient(#5c80b4, #5c80b4) center / 100% 1px no-repeat; }
input[type=range]::-webkit-slider-thumb { appearance: none; width: 9px; height: 13px; background: linear-gradient(#4f6d9c, #4f6d9c) center / 1px 6px no-repeat, #eaf2fc; border: 1px solid #4f6d9c; border-radius: 1px 1px 5px 5px; }
.lang { position: absolute; right: 0; top: -5px; width: 79px; height: 27px; padding: 0 6px 0 4px; display: flex; align-items: center; justify-content: space-between; background: linear-gradient(#9aa0a8, #4e545e 40%, #2e343e); border-top: 1px solid #c8ccd4; }
.dots { width: 9px; height: 17px; background: repeating-linear-gradient(#222 0 2px, transparent 2px 4px), repeating-linear-gradient(90deg, #222 0 2px, #6a6f78 2px 4px); opacity: 0.6; }
.lm { display: flex; flex-direction: column; align-items: center; gap: 7px; }
.dash { width: 6px; height: 2px; background: #fff; }

.taskbar { flex: none; height: 39px; display: flex; align-items: center; background: linear-gradient(#4c6684 0, #0e2c54 2px, #0a2550 50%, #0c2f62); border-top: 1px solid #0a1a30; color: #fff; }
.start { margin-left: 8px; width: 38px; height: 38px; }
.tasks { display: flex; gap: 4px; margin-left: 14px; }
.tasks button { width: 58px; height: 38px; border: 1px solid #7d90aa; border-radius: 3px; background: linear-gradient(155deg, #6f8199, #3d5678 45%, #1d3b64 50%, #1a3e70); box-shadow: inset 0 0 1px #c4d0e0; }
.tasks .multi { width: 50px; margin-right: 8px; box-shadow: 3px 0 #17345e, 4px 0 #7d90aa, 6px 0 #17345e, 7px 0 #7d90aa; }
.tasks .active { background: linear-gradient(155deg, #d8dee6, #a9b6c6 45%, #8b9db4 50%, #a4b8d0); border-color: #dfe6ee; }
.tray { margin-left: auto; display: flex; align-items: center; height: 100%; }
.icons { display: flex; align-items: center; gap: 9px; margin-right: 8px; }
.icons .up { margin-right: 3px; }
.clock { width: 76px; display: flex; flex-direction: column; align-items: center; line-height: 18px; }
.desk { width: 14px; height: 38px; border: 1px solid #6a7f9c; background: linear-gradient(#5a708e, #1c3c68 50%, #123058); }
</style>
